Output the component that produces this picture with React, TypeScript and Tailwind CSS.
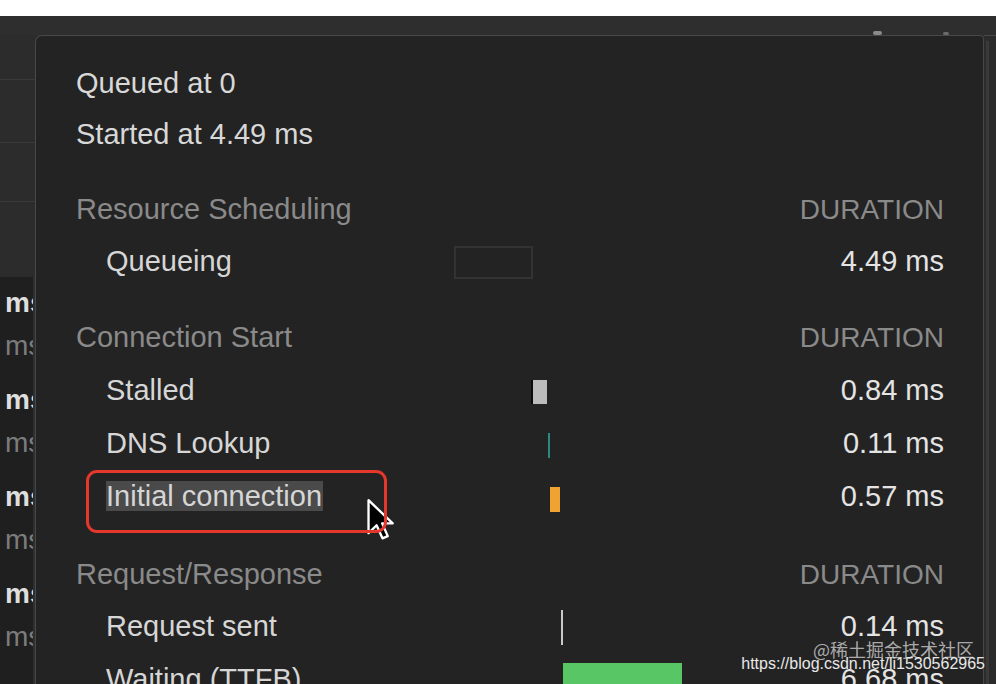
import React from "react";

const PX_PER_MS = 17.6;

type Bar = { start: number; dur: number; cls: string };
type Row = { name: string; duration: string; bar: Bar; h: string; highlight?: boolean };
type Section = { title: string; mt: string; rows: Row[] };

const sections: Section[] = [
  {
    title: "Resource Scheduling",
    mt: "mt-[24px]",
    rows: [
      {
        name: "Queueing",
        duration: "4.49 ms",
        h: "h-[52px]",
        bar: { start: 0, dur: 4.49, cls: "h-[33px] border-2 border-[#333333] mt-[1px]" },
      },
    ],
  },
  {
    title: "Connection Start",
    mt: "mt-[24px]",
    rows: [
      {
        name: "Stalled",
        duration: "0.84 ms",
        h: "h-[53px]",
        bar: { start: 4.4, dur: 0.88, cls: "h-[24px] bg-[#bcbcbc] border-l-2 border-l-[#0c0c0c] mt-[3px]" },
      },
      {
        name: "DNS Lookup",
        duration: "0.11 ms",
        h: "h-[53px]",
        bar: { start: 5.33, dur: 0.11, cls: "h-[25px] bg-[#2a8a80] mt-[3px]" },
      },
      {
        name: "Initial connection",
        duration: "0.57 ms",
        h: "h-[53px]",
        highlight: true,
        bar: { start: 5.43, dur: 0.62, cls: "h-[25px] bg-[#f0a332] mt-[6px]" },
      },
    ],
  },
  {
    title: "Request/Response",
    mt: "mt-[26px]",
    rows: [
      {
        name: "Request sent",
        duration: "0.14 ms",
        h: "h-[52px]",
        bar: { start: 6.07, dur: 0.14, cls: "h-[35px] bg-[#c9c9c9]" },
      },
      {
        name: "Waiting (TTFB)",
        duration: "6.68 ms",
        h: "h-[53px]",
        bar: { start: 6.2, dur: 6.76, cls: "h-[34px] bg-[#58c665] mt-[1px]" },
      },
    ],
  },
];

const font = { fontFamily: '"Liberation Sans", Arial, Helvetica, sans-serif' };

function Cursor() {
  return (
    <svg width="30" height="44" viewBox="0 0 20 30" className="absolute left-[290px] top-[28px]">
      <path
        d="M1.5 1.5 L1.5 24 L7 18.6 L11 27.5 L14.6 26 L10.8 17.3 L18 17.3 Z"
        fill="#000"
        stroke="#fff"
        strokeWidth="1.6"
        strokeLinejoin="round"
      />
    </svg>
  );
}

function TimingRow({ row }: { row: Row }) {
  const left = row.bar.start * PX_PER_MS;
  const width = Math.max(2, row.bar.dur * PX_PER_MS);
  return (
    <div className={`relative flex items-center ${row.h}`}>
      <div className="w-[378px] pl-[30px] text-[29px] text-[#d6d6d6]">
        {row.highlight ? (
          <span className="bg-[#4a4a4a] leading-[30px] inline-block pr-[1px]">{row.name}</span>
        ) : (
          row.name
        )}
      </div>
      <div className="w-[300px] h-full flex items-center">
        <div className={row.bar.cls} style={{ marginLeft: left, width }} />
      </div>
      <div className="flex-1 text-right text-[29px] text-[#e4e4e4]">{row.duration}</div>
      {row.highlight && (
        <>
          <Cursor />
          <div className="absolute left-[10px] top-[0px] w-[301px] h-[63px] border-[3px] border-[#e5372b] rounded-[11px]" />
        </>
      )}
    </div>
  );
}

export default function App() {
  const msRows = [0, 1, 2, 3, 4];
  return (
    <div className="w-[996px] h-[684px] overflow-hidden bg-[#2c2c2c] flex flex-col relative" style={font}>
      <div className="h-[16px] bg-white shrink-0" />
      <div className="h-[19px] bg-[#2e2e2e] shrink-0 flex items-end">
        <div className="ml-[873px] w-[9px] h-[4px] rounded-full bg-[#8a8a8a]" />
        <div className="ml-[61px] w-[6px] h-[3px] rounded-full bg-[#6a6a6a]" />
      </div>
      <div className="flex flex-1 min-h-0">
        {/* left background column */}
        <div className="w-[35px] shrink-0 overflow-hidden flex flex-col">
          <div className="h-[45px] shrink-0 border-b border-[#3a3a3a]" />
          <div className="h-[63px] shrink-0 border-b border-[#3a3a3a]" />
          <div className="h-[59px] shrink-0 border-b border-[#3a3a3a]" />
          <div className="h-[75px] shrink-0" />
          <div className="flex-1 min-h-0 overflow-hidden bg-[#1f1f1f] pt-[4px] pl-[5px] border-r-2 border-[#2f2f2f]">
            {msRows.map((i) => (
              <div key={i} className="h-[97px]">
                <div className="h-[43px] flex items-center text-[28px] font-bold text-[#dedede] whitespace-nowrap">ms</div>
                <div className="h-[43px] flex items-center text-[28px] text-[#7c7c7c] whitespace-nowrap">ms</div>
              </div>
            ))}
          </div>
        </div>

        {/* popup */}
        <div className="w-[949px] shrink-0 bg-[#232323] border-l border-t border-r border-[#484848] rounded-tl-[7px] rounded-tr-[4px] pl-[40px] pr-[39px] pt-[22px]">
          <div className="h-[51px] flex items-center text-[29px] text-[#d8d8d8]">Queued at 0</div>
          <div className="h-[51px] flex items-center text-[29px] text-[#d8d8d8]">Started at 4.49 ms</div>
          {sections.map((s) => (
            <div key={s.title} className={s.mt}>
              <div className="h-[52px] flex items-center justify-between">
                <span className="text-[29px] text-[#8a8a8a]">{s.title}</span>
                <span className="text-[28px] text-[#8a8a8a]">DURATION</span>
              </div>
              {s.rows.map((r) => (
                <TimingRow key={r.name} row={r} />
              ))}
            </div>
          ))}
        </div>

        {/* right strip */}
        <div className="flex-1 border-t border-[#484848] flex">
          <div className="mt-[5px] ml-[2px] w-[3px] bg-[#3a3a3a]" />
          <div className="flex-1 bg-[#2b2b2b]" />
        </div>
      </div>

      {/* watermark */}
      <div
        className="absolute right-[22px] top-[640px] text-[18px] text-[#cfcfcf]/80 leading-none"
        style={{ fontFamily: '"Noto Sans CJK SC", "Liberation Sans", sans-serif' }}
      >
        @稀土掘金技术社区
      </div>
      <div className="absolute right-[11px] top-[656px] text-[16px] text-[#e8e8e8] leading-none">
        https://blog.csdn.net/li1530562965
      </div>
    </div>
  );
}
